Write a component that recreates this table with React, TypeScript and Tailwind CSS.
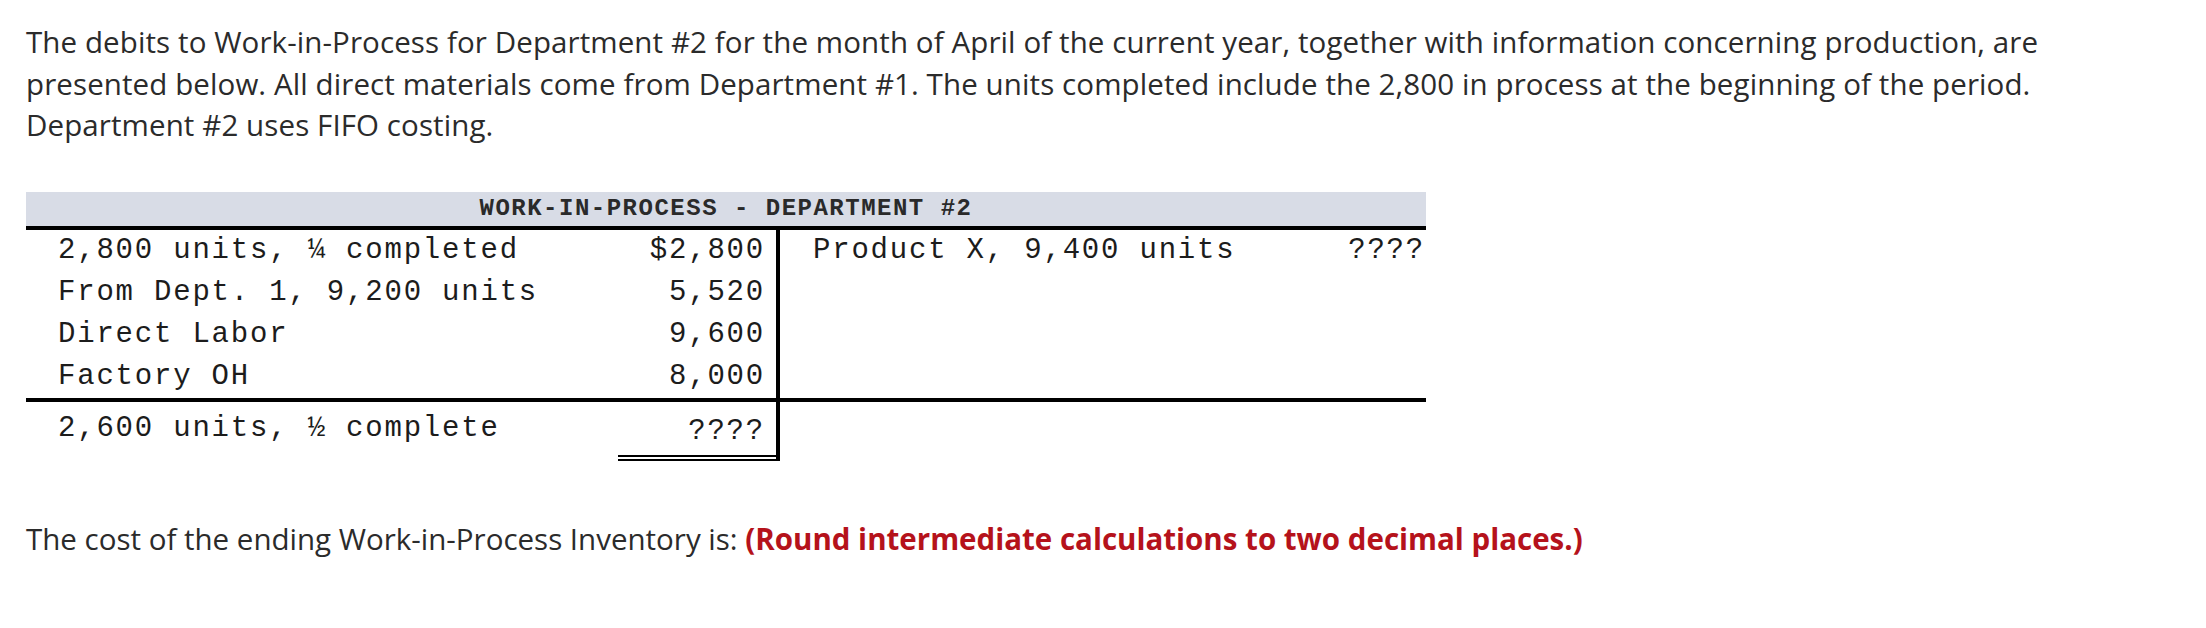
const mono = "font-['Liberation_Mono','Courier_New',monospace]"

const rows = [
  { label: '2,800 units, ¼ completed', amount: '$2,800' },
  { label: 'From Dept. 1, 9,200 units', amount: '5,520' },
  { label: 'Direct Labor', amount: '9,600' },
  { label: 'Factory OH', amount: '8,000' },
]

const TAccount = () => {
  return (
    <div className={`w-[1400px] text-[29px] leading-[42px] tracking-[1.8px] text-[#1c1c1c] ${mono}`}>
      <div className="h-[38px] bg-[#d8dce6] border-b-4 border-black flex items-center justify-center">
        <span className="text-[24px] font-bold tracking-[1.5px] text-[#2a2a2a]">
          WORK-IN-PROCESS - DEPARTMENT #2
        </span>
      </div>
      <div className="flex">
        <div className="w-[754px] border-r-4 border-black">
          {rows.map((r) => (
            <div key={r.label} className="flex h-[42px] pl-8 pr-[11px]">
              <span>{r.label}</span>
              <span className="ml-auto">{r.amount}</span>
            </div>
          ))}
        </div>
        <div className="flex-1">
          <div className="flex h-[42px] pl-[33px] pr-[1px]">
            <span>Product X, 9,400 units</span>
            <span className="ml-auto">????</span>
          </div>
        </div>
      </div>
      <div className="h-1 bg-black" />
      <div className="flex">
        <div className="w-[754px] h-[59px] border-r-4 border-black flex">
          <div className="pl-8 pt-[6px]">2,600 units, ½ complete</div>
          <div className="ml-auto w-[158px] h-[59px] border-b-[6px] border-double border-black pt-[9px] pr-[11px] text-right">
            ????
          </div>
        </div>
      </div>
    </div>
  )
}

const App = () => {
  return (
    <section className="min-h-screen bg-white pl-[26px] pt-[21px] font-['Open_Sans','Noto_Sans',sans-serif] text-[#2b2b2b]">
      <p className="w-[2110px] text-[29.5px] leading-[41.5px] tracking-[0.1px]">
        The debits to Work-in-Process for Department #2 for the month of April of the current year, together with
        information concerning production, are presented below. All direct materials come from Department #1. The
        units completed include the 2,800 in process at the beginning of the period. Department #2 uses FIFO costing.
      </p>
      <div className="mt-[46px]">
        <TAccount />
      </div>
      <p className="mt-[57px] text-[29.5px] leading-[41.5px]">
        The cost of the ending Work-in-Process Inventory is:{' '}
        <span className="font-bold text-[#b5121b]">(Round intermediate calculations to two decimal places.)</span>
      </p>
    </section>
  )
}
export default App
